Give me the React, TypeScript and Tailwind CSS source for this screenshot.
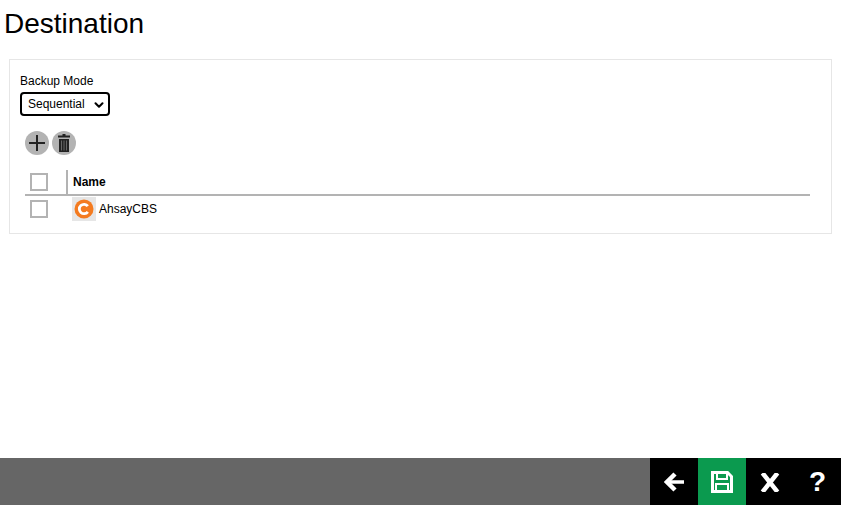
import { ChevronDown } from 'lucide-react'

export default function App() {
  return (
    <div className="flex flex-col w-[841px] h-[505px] bg-white overflow-hidden font-['Liberation_Sans',Arial,sans-serif] text-black">
      <div className="flex-1 px-[9px]">
        <h1 className="h-[59px] pt-[7px] -ml-[5px] text-[28px] leading-[34px] font-normal">Destination</h1>

        {/* Panel */}
        <div className="w-[823px] h-[175px] border border-[#e6e6e6] pl-[10px] pt-[14px]">
          <div className="text-[12px] leading-[14px]">Backup Mode</div>
          <div className="relative mt-[4px] w-[90px] h-[24px] border-2 border-black rounded-[4px] flex items-center pl-[6px] text-[12px]">
            Sequential
            <ChevronDown size={14} strokeWidth={3.5} className="absolute right-[2px] top-[4px]" />
          </div>

          <div className="flex gap-[3px] ml-[5px] mt-[15px]">
            <div className="w-6 h-6 rounded-full bg-[#b3b3b3] flex items-center justify-center">
              <svg width="18" height="18" viewBox="0 0 18 18">
                <path d="M9 1v16M1 9h16" stroke="#222" strokeWidth="2" />
              </svg>
            </div>
            <div className="w-6 h-6 rounded-full bg-[#b3b3b3] flex items-center justify-center">
              <svg width="12" height="18" viewBox="0 0 12 18">
                <path d="M4.500 0h3v1.500H12V3.500H0V1.500h4.500z" fill="#222" />
                <path d="M1 5h10v13H1z" fill="#222" />
                <path d="M3.500 6.500v10M6 6.500v10M8.500 6.500v10" stroke="#777" strokeWidth="0.800" />
              </svg>
            </div>
          </div>

          {/* Table */}
          <div className="w-[785px] ml-[5px] mt-[15px]">
            <div className="flex h-[26px] border-b-2 border-[#b3b3b3]">
              <div className="w-[43px] border-r-2 border-[#b3b3b3] h-[24px] pl-[5px] pt-[3px] shrink-0">
                <div className="w-[18px] h-[18px] border-2 border-[#b3b3b3]" />
              </div>
              <div className="pl-[5px] pt-[5px] text-[12px] leading-[14px] font-bold">Name</div>
            </div>
            <div className="flex items-center h-[28px] -mt-px">
              <div className="w-[47px] pl-[5px] shrink-0">
                <div className="w-[18px] h-[18px] border-2 border-[#b3b3b3]" />
              </div>
              <div className="w-[24px] h-[24px] bg-[#e6e6e6] flex items-center justify-center shrink-0">
                <svg width="20" height="20" viewBox="0 0 20 20">
                  <circle cx="10" cy="10" r="9.500" fill="#f47b20" />
                  <path d="M13.800 7.200a4.700 4.700 0 1 0 0 5.600" fill="none" stroke="#fff" strokeWidth="2.800" />
                </svg>
              </div>
              <span className="pl-[3px] text-[12px] leading-[14px]">AhsayCBS</span>
            </div>
          </div>
        </div>
      </div>

      {/* Footer */}
      <div className="flex justify-end h-[47px] bg-[#666666] shrink-0">
        <div className="flex bg-black">
          <div className="w-[48px] flex items-center justify-center">
            <svg width="20" height="20" viewBox="0 0 20 20">
              <path d="M11 2l-8 8 8 8" fill="none" stroke="#fff" strokeWidth="4.500" />
              <path d="M4 10h16" stroke="#fff" strokeWidth="3.500" />
            </svg>
          </div>
          <div className="w-[48px] bg-[#0b9a4f] flex items-center justify-center">
            <svg width="22" height="22" viewBox="0 0 22 22">
              <path d="M1.500 1.500h15l4 4v15h-19z" fill="none" stroke="#fff" strokeWidth="3" />
              <path d="M6 2v6h10V2" fill="none" stroke="#fff" strokeWidth="2" />
              <path d="M5 20v-7h12v7" fill="none" stroke="#fff" strokeWidth="2" />
            </svg>
          </div>
          <div className="w-[48px] flex items-center justify-center pt-[2px]">
            <svg width="22" height="19" viewBox="0 0 22 19">
              <path d="M3.500 0l15 19M18.500 0l-15 19" stroke="#fff" strokeWidth="4.500" />
            </svg>
          </div>
          <div className="w-[47px] flex items-center justify-center text-white text-[28px] font-bold leading-none">?</div>
        </div>
      </div>
    </div>
  )
}
